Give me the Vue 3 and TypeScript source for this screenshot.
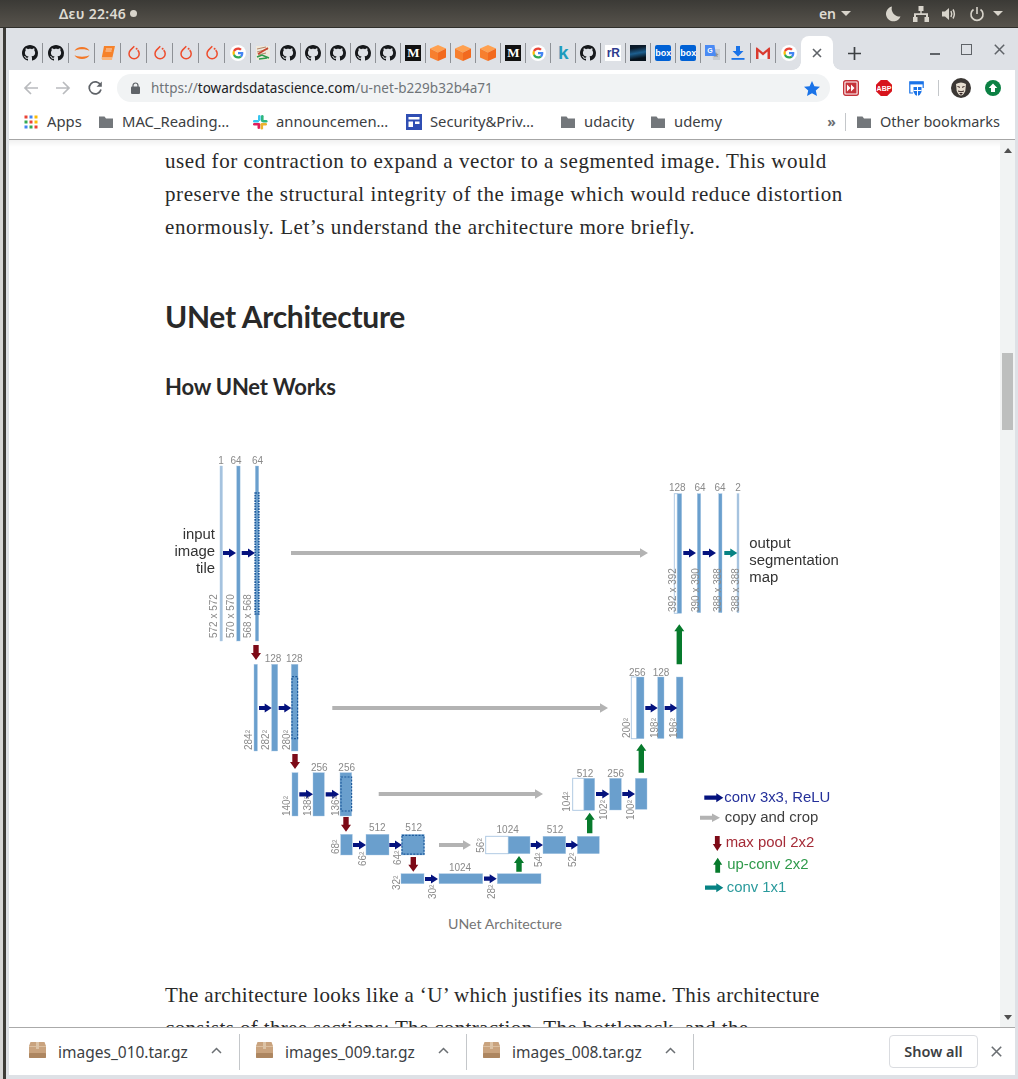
<script setup lang="ts">
type Bar = { x: number; w: number; y: number; h: number; light?: boolean };
type Arrow = { a: number[]; c: string; t?: number; hw?: number; hl?: number };

const tabs: string[] = [
  'gh','gh','jup','book','torch','torch','torch','torch','g',
  'chart','gh','gh','gh','gh','gh','m','cube','cube','cube','m','g','k','gh','rr','dark','box','box','tr','dl','gmail','g',
];
const bookmarks = [
  { icon: 'apps', label: 'Apps', w: 75 },
  { icon: 'folder', label: 'MAC_Reading…', w: 154 },
  { icon: 'slack', label: 'announcemen…', w: 154 },
  { icon: 'sec', label: 'Security&Priv…', w: 154 },
  { icon: 'folder', label: 'udacity', w: 90 },
  { icon: 'folder', label: 'udemy', w: 90 },
];
const downloads = ['images_010.tar.gz', 'images_009.tar.gz', 'images_008.tar.gz'];

const bars: Bar[] = [
  { x: 220, w: 2.4, y: 465, h: 175, light: true },
  { x: 236.7, w: 3.4, y: 465, h: 175 },
  { x: 255.3, w: 3.4, y: 465, h: 175 },
  { x: 254, w: 3.4, y: 663.3, h: 86.7 },
  { x: 271.7, w: 6, y: 663.3, h: 86.7 },
  { x: 291.3, w: 6.7, y: 663.3, h: 86.7 },
  { x: 292, w: 6, y: 771.7, h: 43.3 },
  { x: 313, w: 11.3, y: 771.7, h: 43.3 },
  { x: 340, w: 11.7, y: 771.7, h: 43.3 },
  { x: 340.7, w: 11.6, y: 833.3, h: 20.7 },
  { x: 366, w: 23, y: 833.3, h: 20.7 },
  { x: 401.7, w: 22.6, y: 833.3, h: 20.7 },
  { x: 401, w: 23, y: 872.7, h: 10 },
  { x: 439, w: 43.7, y: 872.7, h: 10 },
  { x: 497.3, w: 43.7, y: 872.7, h: 10 },
  { x: 508.3, w: 21.7, y: 835.3, h: 17.4 },
  { x: 543, w: 22.7, y: 835.3, h: 17.4 },
  { x: 577.3, w: 22, y: 835.3, h: 17.4 },
  { x: 584, w: 10.7, y: 777.3, h: 32 },
  { x: 609.7, w: 11.6, y: 777.3, h: 31.7 },
  { x: 635.3, w: 11.7, y: 777.3, h: 31 },
  { x: 636.7, w: 7.3, y: 676, h: 61.7 },
  { x: 657.7, w: 6.3, y: 676, h: 61.5 },
  { x: 676.3, w: 6.7, y: 676, h: 61.5 },
  { x: 677.3, w: 4.4, y: 492.7, h: 119.6 },
  { x: 697.3, w: 3.4, y: 492.7, h: 119 },
  { x: 718.7, w: 3.3, y: 492.7, h: 119 },
  { x: 737, w: 2, y: 492.7, h: 119, light: true },
];
const whites = [
  { x: 485.7, w: 22.6, y: 835.3, h: 17.4 },
  { x: 572.7, w: 11.3, y: 777.3, h: 32 },
  { x: 631.3, w: 5.4, y: 676, h: 61.7 },
  { x: 674.3, w: 3, y: 492.7, h: 119.6 },
];
const dotted = [
  { x: 255.2, w: 3.6, y: 492, h: 121, sw: 1.7, dash: '1.7 1' },
  { x: 292, w: 5.6, y: 675.7, h: 62, sw: 1.2, dash: '2 1.3' },
  { x: 341, w: 10.6, y: 776, h: 34, sw: 1.2, dash: '2 1.3' },
  { x: 402, w: 22, y: 834.4, h: 18.8, sw: 1.2, dash: '2 1.3' },
];

const NAVY = '#04127e';
const RED = '#7d0a17';
const GREEN = '#077a2c';
const GRAY = '#b3b3b3';
const TEAL = '#078283';

const arrows: Arrow[] = [
  ...[[223,552,236],[241.7,552,255],[259,707,271.7],[278.7,707,291.3],[299.3,793.3,313],[325.7,793.3,339],
    [353,844,366],[389.3,844,402],[425,878,438],[484,877.7,496.7],[530.7,844,543],[566,844,578.3],
    [596,793,609.3],[622.3,793,635],[645.3,707,657.7],[664.7,707,677.3],[683.3,552,696],[702.7,552,716]]
    .map(v => ({ a: [v[0], v[1], v[2], v[1]], c: NAVY })),
  { a: [724.3, 552, 737.3, 552], c: TEAL },
  ...[[291,552,648],[332.3,707,608],[378.7,793,543],[439,844,471]]
    .map(v => ({ a: [v[0], v[1], v[2], v[1]], c: GRAY, t: 4, hw: 9.5, hl: 8 })),
  ...[[256,644,659],[295,753,768],[346,816,830.7],[413.3,856,870.7]]
    .map(v => ({ a: [v[0], v[1], v[0], v[2]], c: RED, t: 5.4, hw: 10, hl: 7 })),
  ...[[519,870.7,855],[589.7,832.3,811.7],[641.3,771.7,742.7],[679.3,663.3,623.3]]
    .map(v => ({ a: [v[0], v[1], v[0], v[2]], c: GREEN, t: 5.4, hw: 10, hl: 7 })),
  { a: [704.3, 796.7, 723.3, 796.7], c: NAVY },
  { a: [700, 816.7, 720, 816.7], c: GRAY, t: 4, hw: 8.5, hl: 8 },
  { a: [717.3, 835, 717.3, 850], c: RED, t: 4.8, hw: 9, hl: 7 },
  { a: [717.7, 871.7, 717.7, 856.7], c: GREEN, t: 4.8, hw: 9, hl: 7 },
  { a: [705, 886.7, 723.3, 886.7], c: TEAL },
];

function arrowPoints(ar: Arrow): string {
  const [x1, y1, x2, y2] = ar.a;
  const t = (ar.t ?? 4.2) / 2;
  const hw = (ar.hw ?? 9) / 2;
  const hl = ar.hl ?? 7;
  const len = Math.hypot(x2 - x1, y2 - y1);
  const ux = (x2 - x1) / len;
  const uy = (y2 - y1) / len;
  const nx = -uy;
  const ny = ux;
  const bx = x2 - ux * hl;
  const by = y2 - uy * hl;
  const p = [
    [x1 + nx * t, y1 + ny * t], [bx + nx * t, by + ny * t], [bx + nx * hw, by + ny * hw], [x2, y2],
    [bx - nx * hw, by - ny * hw], [bx - nx * t, by - ny * t], [x1 - nx * t, y1 - ny * t],
  ];
  return p.map(q => q.map(n => n.toFixed(1)).join(',')).join(' ');
}

const tops = [
  ['1',221,463],['64',236,463],['64',257.6,463],['128',273,660.5],['128',294.3,660.5],
  ['256',319.3,770],['256',346.7,770],['512',377.3,830],['512',413.7,830],['1024',460,870],
  ['1024',507.7,832],['512',555,832],['512',585,775.5],['256',615.7,775.5],['256',637.3,674.5],['128',661,674.5],
  ['128',677.3,490],['64',700,490],['64',720,490],['2',738,490],
] as [string, number, number][];

const sides = [
  ['572 x 572',217,637],['570 x 570',234,637],['568 x 568',251,637],
  ['284²',252,749],['282²',269,749],['280²',290,749],
  ['140²',290,815],['138²',311,815],['136²',339,815],
  ['68²',339,853],['66²',366,865],['64²',401,864],
  ['32²',400,889],['30²',436,898],['28²',495,898],
  ['56²',484,851.7],['54²',542,866],['52²',576.3,866],
  ['104²',570.3,810.7],['102²',607.3,819],['100²',633.7,819],
  ['200²',630,737],['198²',657.7,737],['196²',677,737],
  ['392 x 392',675.7,611],['390 x 390',699,611],['388 x 388',720.7,611],['388 x 388',739.3,611],
] as [string, number, number][];

const legend = [
  { t: 'conv 3x3, ReLU', x: 724.3, y: 801, c: '#24309a' },
  { t: 'copy and crop', x: 724.7, y: 820.7, c: '#3f3f3f' },
  { t: 'max pool 2x2', x: 725.7, y: 846, c: '#a52c38' },
  { t: 'up-conv 2x2', x: 727.3, y: 868.3, c: '#2f9a4b' },
  { t: 'conv 1x1', x: 726.7, y: 890.7, c: '#2a9a9c' },
];
const gh = 'M8 0C3.58 0 0 3.58 0 8c0 3.54 2.29 6.53 5.47 7.59.4.07.55-.17.55-.38 0-.19-.01-.82-.01-1.49-2.01.37-2.53-.49-2.69-.94-.09-.23-.48-.94-.82-1.13-.28-.15-.68-.52-.01-.53.63-.01 1.08.58 1.23.82.72 1.21 1.87.87 2.33.66.07-.52.28-.87.51-1.07-1.78-.2-3.64-.89-3.64-3.95 0-.87.31-1.59.82-2.15-.08-.2-.36-1.02.08-2.12 0 0 .67-.21 2.2.82.64-.18 1.32-.27 2-.27.68 0 1.36.09 2 .27 1.53-1.04 2.2-.82 2.2-.82.44 1.1.16 1.92.08 2.12.51.56.82 1.27.82 2.15 0 3.07-1.87 3.75-3.65 3.95.29.25.54.73.54 1.48 0 1.07-.01 1.93-.01 2.2 0 .21.15.46.55.38A8.013 8.013 0 0016 8c0-4.42-3.58-8-8-8z';
</script>

<template>
  <div class="screen">
    <header class="topbar">
      <div class="clock">Δευ 22:46<i class="dot"></i></div>
      <div class="tray">
        <span class="lang">en</span><i class="caret lang-caret"></i>
        <svg class="tray-ic moon" viewBox="0 0 16 16"><path d="M7 .5a7.500 7.500 0 1 0 8.500 10A7.800 7.800 0 0 1 7 .5z" fill="#d8d4cb"/></svg>
        <svg class="tray-ic" viewBox="0 0 16 16"><path d="M5.500 0h5v5H8.700v2.200H15V11h1.500v5h-5v-5H13V9H3v2h1.500v5h-5v-5H1V7.200h6.300V5H5.500z" fill="#d8d4cb"/></svg>
        <svg class="tray-ic" viewBox="0 0 16 16"><path d="M1 5.500h3L8 2v12L4 10.500H1z" fill="#d8d4cb"/><path d="M10 5q1.500 3 0 6M12 3.500q2.700 4.500 0 9" stroke="#d8d4cb" stroke-width="1.500" fill="none"/></svg>
        <svg class="tray-ic" viewBox="0 0 16 16"><path d="M4.500 3.500a6 6 0 1 0 7 0" stroke="#d8d4cb" stroke-width="1.600" fill="none"/><path d="M8 1v7" stroke="#d8d4cb" stroke-width="1.600"/></svg>
        <i class="caret last-caret"></i>
      </div>
    </header>

    <div class="desk">
      <div class="edge"></div>
      <div class="window">
        <div class="tabstrip">
          <div v-for="(t, i) in tabs" :key="i" class="tab" :class="{ wide: i < 9, nosep: i === tabs.length - 1 }">
            <svg v-if="t === 'gh'" class="fav" viewBox="0 0 16 16"><path :d="gh" fill="#16181b"/></svg>
            <svg v-else-if="t === 'jup'" class="fav" viewBox="0 0 16 16"><path d="M.5 6C2.500 .8 13.500 .8 15.500 6C13 3.800 3 3.800 .5 6z M.5 10C2.500 15.200 13.500 15.200 15.500 10C13 12.200 3 12.200 .5 10z" fill="#f37726"/></svg>
            <svg v-else-if="t === 'book'" class="fav" viewBox="0 0 16 16"><path d="M4 1h11l-2.600 11.500H1.800z" fill="#f6822a"/><path d="M1.800 12.500h10.600l-.5 2.500H2.300q-1.300-1.200-.5-2.500z" fill="#fbb77c"/><path d="M6 4h6M5.500 6h6" stroke="#fff" stroke-width=".7"/></svg>
            <svg v-else-if="t === 'torch'" class="fav" viewBox="0 0 16 16"><path d="M8.300 1.300L4.500 5.100a5.100 5.100 0 1 0 7.200 0" stroke="#ee4c2c" stroke-width="1.500" fill="none"/><circle cx="10.600" cy="3.800" r="1" fill="#ee4c2c"/></svg>
            <svg v-else-if="t === 'g'" class="fav" viewBox="0 0 64 64"><circle cx="32" cy="32" r="32" fill="#fff"/><g transform="translate(10 10) scale(.92)"><path fill="#EA4335" d="M24 9.500c3.540 0 6.710 1.220 9.210 3.600l6.850-6.850C35.900 2.380 30.470 0 24 0 14.620 0 6.510 5.380 2.560 13.220l7.980 6.190C12.430 13.720 17.740 9.500 24 9.500z"/><path fill="#4285F4" d="M46.980 24.550c0-1.570-.15-3.090-.38-4.550H24v9.020h12.940c-.58 2.960-2.260 5.480-4.780 7.180l7.730 6c4.510-4.180 7.090-10.360 7.090-16.650z"/><path fill="#FBBC05" d="M10.530 28.590c-.48-1.450-.76-2.990-.76-4.590s.27-3.140.76-4.590l-7.980-6.190C.92 16.460 0 20.120 0 24c0 3.880.92 7.540 2.560 10.780l7.970-6.190z"/><path fill="#34A853" d="M24 48c6.480 0 11.930-2.130 16.030-5.810l-7.730-6c-2.150 1.450-4.920 2.300-8.300 2.300-6.260 0-11.570-4.220-13.470-9.910l-7.980 6.190C6.510 42.620 14.620 48 24 48z"/></g></svg>
            <svg v-else-if="t === 'chart'" class="fav" viewBox="0 0 16 16"><rect x="1" y="1" width="14" height="14" fill="#efe9dc"/><path d="M2 4l9-2M2 7l11-3M3 10l8-2" stroke="#b5866a" stroke-width="1"/><path d="M3 9l10-6" stroke="#c7452f" stroke-width="1.800"/><path d="M2 12l5-2 7 3M4 14l8-1" stroke="#2f9a4b" stroke-width="1.600" fill="none"/></svg>
            <span v-else-if="t === 'm'" class="fav medium">M</span>
            <svg v-else-if="t === 'cube'" class="fav" viewBox="0 0 16 16"><path d="M8 0l8 3.500L8 7.500 0 3.500z" fill="#ffa04f"/><path d="M0 3.500l8 4V16l-8-3.500z" fill="#f77f2f"/><path d="M16 3.500l-8 4V16l8-3.500z" fill="#f26a1f"/></svg>
            <span v-else-if="t === 'k'" class="fav kaggle">k</span>
            <span v-else-if="t === 'rr'" class="fav rr">rR</span>
            <span v-else-if="t === 'dark'" class="fav darkimg"></span>
            <span v-else-if="t === 'box'" class="fav boxlogo">box</span>
            <svg v-else-if="t === 'tr'" class="fav" viewBox="0 0 16 16"><path d="M7 4h8v11H8z" fill="#c9cdd2"/><path d="M11 7l.8 1.800 1.900.2-1.400 1.300.4 1.900-1.700-1-1.700 1 .4-1.900L8.300 9l1.900-.2z" fill="#8b9096"/><path d="M0 0h9.500L11 11H0z" fill="#4a8af4"/><text x="5" y="8" font-size="7" fill="#fff" font-family="Liberation Sans" font-weight="700" text-anchor="middle">G</text></svg>
            <svg v-else-if="t === 'dl'" class="fav" viewBox="0 0 16 16"><path d="M6 1h4v5h3.500L8 11.500 2.500 6H6z" fill="#1a73e8"/><rect x="1.500" y="13" width="13" height="1.800" fill="#1a73e8"/></svg>
            <svg v-else-if="t === 'gmail'" class="fav" viewBox="0 0 16 16"><path d="M1 3l7 5.500L15 3v11H1z" fill="#eceff1"/><path d="M1 14V2.500h1L8 7.500l6-5h1V14h-2.500V6.500L8 10.500 3.500 6.500V14z" fill="#d93a2f"/></svg>
          </div>
          <div class="active-tab"><svg width="10" height="10" viewBox="0 0 10 10"><path d="M1 1l8 8M9 1l-8 8" stroke="#5f6368" stroke-width="1.600"/></svg></div>
          <svg class="plus" width="13" height="13" viewBox="0 0 13 13"><path d="M6.500 0v13M0 6.500h13" stroke="#3c4043" stroke-width="1.700"/></svg>
          <div class="winctl">
            <i class="min"></i><i class="max"></i>
            <svg width="11" height="11" viewBox="0 0 11 11"><path d="M.8.800l9.400 9.400M10.200.800L.8 10.200" stroke="#5f6368" stroke-width="1.500"/></svg>
          </div>
        </div>

        <div class="toolbar">
          <button class="nav"><svg width="16" height="16" viewBox="0 0 16 16"><path d="M15 8H2M8 2L2 8l6 6" stroke="#b9bbbe" stroke-width="1.700" fill="none"/></svg></button>
          <button class="nav"><svg width="16" height="16" viewBox="0 0 16 16"><path d="M1 8h13M8 2l6 6-6 6" stroke="#b9bbbe" stroke-width="1.700" fill="none"/></svg></button>
          <button class="nav"><svg width="16" height="16" viewBox="0 0 16 16"><path d="M13.500 5A6 6 0 1 0 14 9.500" stroke="#5f6368" stroke-width="1.700" fill="none"/><path d="M14.800 1.500v5.300H9.500z" fill="#5f6368"/></svg></button>
          <div class="omni">
            <svg class="lock" width="9" height="12" viewBox="0 0 9 12"><path d="M2 5V3.500a2.500 2.500 0 0 1 5 0V5" stroke="#5f6368" stroke-width="1.200" fill="none"/><rect y="4.500" width="9" height="7.500" rx="1" fill="#5f6368"/></svg>
            <span class="url"><span class="u1">https://</span><span class="u2">towardsdatascience.com</span><span class="u1">/u-net-b229b32b4a71</span></span>
            <svg class="star" width="16" height="15" viewBox="0 0 16 15"><path d="M8 0l2.400 5.200 5.600.6-4.200 3.800 1.200 5.400L8 12.200 3 15l1.200-5.400L0 5.800l5.600-.6z" fill="#1a73e8"/></svg>
          </div>
          <div class="ext">
            <svg width="16" height="16" viewBox="0 0 16 16"><rect x=".7" y=".7" width="14.600" height="14.600" rx="2" fill="#fff" stroke="#c5333a" stroke-width="1.400"/><rect x="2.500" y="2.500" width="11" height="11" fill="#c5333a"/><path d="M4 4.500l3.500 3.500L4 11.500zM8 4.500l3.500 3.500L8 11.500z" fill="#fff"/></svg>
          </div>
          <div class="ext">
            <svg width="16" height="16" viewBox="0 0 16 16"><path d="M4.800 0h6.400L16 4.800v6.400L11.200 16H4.800L0 11.200V4.800z" fill="#d7141c"/><text x="8" y="10.500" text-anchor="middle" font-size="7" font-weight="700" font-family="Liberation Sans" fill="#fff">ABP</text></svg>
          </div>
          <div class="ext">
            <svg width="15" height="15" viewBox="0 0 15 15"><path d="M4 12H.8V.8h13.400V7" stroke="#1a73e8" stroke-width="1.200" fill="none"/><rect x=".8" y=".8" width="13.400" height="2.600" fill="#1a73e8"/><path d="M4.500 6h8v5q-1 3-4 4-3-1-4-4z" fill="#1a73e8"/><path d="M8.500 6v9M4.500 9.500h8" stroke="#fff" stroke-width="1"/></svg>
          </div>
          <i class="ext-sep"></i>
          <div class="ext">
            <svg width="20" height="20" viewBox="0 0 20 20"><circle cx="10" cy="10" r="10" fill="#3b3734"/><path d="M5 6q5-3 10 0l-.7 7q-2 4.500-4.300 4.500T5.700 13z" fill="#e6ded0"/><path d="M6.500 8.500l2.500.8M13.500 8.500l-2.500.8M7 13q3 1.500 6 0" stroke="#322" stroke-width="1" fill="none"/><path d="M8 15l2 2 2-2" fill="#322"/></svg>
          </div>
          <div class="ext">
            <svg width="16" height="16" viewBox="0 0 16 16"><circle cx="8" cy="8" r="8" fill="#0b8043"/><path d="M8 3.500l4.300 4.500H10v4H6V8H3.700z" fill="#fff"/></svg>
          </div>
        </div>

        <div class="bookmarks">
          <div v-for="b in bookmarks" :key="b.label" class="bm" :style="{ width: b.w + 'px' }">
            <svg class="bm-ic" viewBox="0 0 16 16">
              <template v-if="b.icon === 'apps'">
                <rect v-for="(c, k) in ['#ea4335','#4285f4','#fbbc05','#34a853','#ea4335','#fbbc05','#4285f4','#34a853','#ea4335']" :key="k" :x="1.500 + (k % 3) * 5" :y="1.500 + Math.floor(k / 3) * 5" width="3" height="3" :fill="c"/>
              </template>
              <path v-else-if="b.icon === 'folder'" d="M1 2.500h5.500L8 4.500h7v9.500H1z" fill="#73777b"/>
              <template v-else-if="b.icon === 'slack'">
                <rect x="6" y="1" width="2.600" height="6" rx="1.300" fill="#36c5f0"/><rect x="1" y="6" width="6" height="2.600" rx="1.300" fill="#36c5f0"/>
                <rect x="9" y="1" width="2.600" height="7" rx="1.300" fill="#2eb67d"/><rect x="10" y="6" width="5.500" height="2.600" rx="1.300" fill="#2eb67d"/>
                <rect x="8.500" y="9" width="6.500" height="2.600" rx="1.300" fill="#ecb22e"/><rect x="8.500" y="10" width="2.600" height="5.500" rx="1.300" fill="#ecb22e"/>
                <rect x="5.500" y="9" width="2.600" height="6" rx="1.300" fill="#e01e5a"/><rect x="1" y="9" width="6.500" height="2.600" rx="1.300" fill="#e01e5a"/>
              </template>
              <template v-else>
                <rect width="16" height="16" fill="#2f4eb3"/><rect x="2.500" y="3" width="11" height="2.500" fill="#fff"/><rect x="2.500" y="7.500" width="4.500" height="5.500" fill="#fff"/><rect x="9" y="7.500" width="4.500" height="2.500" fill="#fff"/>
              </template>
            </svg>
            <span class="bm-label">{{ b.label }}</span>
          </div>
          <span class="more">»</span>
          <i class="bm-sep"></i>
          <div class="bm other">
            <svg class="bm-ic" viewBox="0 0 16 16"><path d="M1 2.500h5.500L8 4.500h7v9.500H1z" fill="#73777b"/></svg>
            <span class="bm-label">Other bookmarks</span>
          </div>
        </div>

        <div class="viewport">
          <main class="page">
            <article class="article">
              <p class="para">
                <span>used for contraction to expand a vector to a segmented image. This would</span>
                <span>preserve the structural integrity of the image which would reduce distortion</span>
                <span>enormously. Let’s understand the architecture more briefly.</span>
              </p>
              <h2 class="h2">UNet Architecture</h2>
              <h3 class="h3">How UNet Works</h3>
              <figure class="fig">
                <svg class="diagram" width="690" height="470" viewBox="165 445 690 470">
                  <rect v-for="(r, i) in whites" :key="'w' + i" :x="r.x" :y="r.y" :width="r.w" :height="r.h" fill="#fff" stroke="#a9c5e0" stroke-width=".9"/>
                  <rect v-for="(r, i) in bars" :key="'b' + i" :x="r.x" :y="r.y" :width="r.w" :height="r.h" :fill="r.light ? '#a5c2de' : '#6a9fcd'" stroke="#a9c8e4" stroke-width=".4"/>
                  <rect v-for="(r, i) in dotted" :key="'d' + i" :x="r.x" :y="r.y" :width="r.w" :height="r.h" fill="none" stroke="#1d5a9c" :stroke-width="r.sw" :stroke-dasharray="r.dash"/>
                  <polygon v-for="(a, i) in arrows" :key="'a' + i" :points="arrowPoints(a)" :fill="a.c"/>
                  <text v-for="(t, i) in tops" :key="'t' + i" class="lbl" :x="t[1]" :y="t[2]" text-anchor="middle">{{ t[0] }}</text>
                  <text v-for="(t, i) in sides" :key="'s' + i" class="lbl" :transform="`translate(${t[1]} ${t[2]}) rotate(-90)`">{{ t[0] }}</text>
                  <text class="big" x="215" y="538" text-anchor="end">input</text>
                  <text class="big" x="215" y="555" text-anchor="end">image</text>
                  <text class="big" x="215" y="572" text-anchor="end">tile</text>
                  <text class="big" x="749.300" y="547">output</text>
                  <text class="big" x="749.300" y="564">segmentation</text>
                  <text class="big" x="749.300" y="580.700">map</text>
                  <text v-for="l in legend" :key="l.t" class="big" :x="l.x" :y="l.y" :style="{ fill: l.c }">{{ l.t }}</text>
                </svg>
                <figcaption class="cap">UNet Architecture</figcaption>
              </figure>
              <p class="para second">
                <span>The architecture looks like a ‘U’ which justifies its name. This architecture</span>
                <span>consists of three sections: The contraction, The bottleneck, and the</span>
              </p>
            </article>
          </main>
          <aside class="scrollbar">
            <i class="sb-up"></i>
            <i class="thumb"></i>
            <i class="sb-down"></i>
          </aside>
        </div>

        <footer class="downloads">
          <div v-for="d in downloads" :key="d" class="dl">
            <svg class="pkg" width="17" height="16" viewBox="0 0 17 16"><path d="M1.500 0h14L17 4v11q0 1-1 1H1q-1 0-1-1V4z" fill="#c9a37e"/><path d="M0 4.500h17" stroke="#e0c6a8" stroke-width=".8"/><rect y="11" width="17" height="5" rx="1" fill="#ad8660"/><path d="M7 0h3v7H7z" fill="#dcc3a6"/></svg>
            <span class="dl-name">{{ d }}</span>
            <svg class="dl-caret" width="11" height="7" viewBox="0 0 11 7"><path d="M1 6l4.500-4.500L10 6" stroke="#6b6f73" stroke-width="1.500" fill="none"/></svg>
          </div>
          <div class="dl-right">
            <button class="showall">Show all</button>
            <svg width="11" height="11" viewBox="0 0 11 11"><path d="M.8.800l9.400 9.400M10.200.800L.8 10.200" stroke="#6b6f73" stroke-width="1.600"/></svg>
          </div>
        </footer>
      </div>
    </div>
  </div>
</template>

<style scoped>
.screen { width: 1018px; height: 1079px; overflow: hidden; display: flex; flex-direction: column; background: #dee1e6; font-family: "Noto Sans", "Open Sans", sans-serif; }
.topbar { height: 27px; flex: none; display: flex; align-items: center; justify-content: space-between; background: linear-gradient(#3b3a36, #57534c); color: #dfdbd2; font-size: 14px; font-weight: 600; border-bottom: 1px solid #302f2b; }
.clock { margin-left: 59px; display: flex; align-items: center; letter-spacing: .3px; }
.dot { width: 7px; height: 7px; border-radius: 50%; background: #d8d4cb; margin-left: 4px; }
.tray { display: flex; align-items: center; margin-right: 15px; }
.lang { margin-right: 5px; }
.caret { width: 0; height: 0; border: 5px solid transparent; border-top: 5px solid #d8d4cb; border-bottom: 0; }
.lang-caret { margin-right: 34px; }
.last-caret { margin-left: -4px; }
.tray-ic { width: 16px; height: 16px; margin-right: 12px; }
.desk { flex: 1; display: flex; min-height: 0; }
.edge { width: 9px; flex: none; background: linear-gradient(90deg, #d6d6d6 0 3px, #3c3b37 3px 6px, #dee1e6 6px); }
.window { flex: 1; min-width: 0; display: flex; flex-direction: column; padding-right: 3px; padding-bottom: 4px; }
.tabstrip { height: 42px; flex: none; display: flex; align-items: center; padding-left: 8.300px; background: #dee1e6; padding-top: 8px; box-sizing: border-box; }
.tab { width: 25px; height: 20px; flex: none; display: flex; align-items: center; justify-content: center; border-right: 1px solid #8e9196; box-sizing: border-box; }
.tab.wide { width: 26px; }
.tab.nosep { border-right: 0; }
.fav { width: 16px; height: 16px; display: block; }
.medium { background: #111; color: #fff; font: 700 13px/16px "Liberation Serif", serif; text-align: center; }
.kaggle { color: #1d9bbd; font: 700 19px/15px "Liberation Sans", sans-serif; text-align: center; }
.rr { background: #fff; color: #2f3c8f; font: 700 12px/16px "Liberation Sans", sans-serif; text-align: center; }
.darkimg { background: linear-gradient(170deg, #0b1a2a 20%, #1d5f8f 50%, #07121c 80%); }
.boxlogo { background: #0061d5; color: #fff; border-radius: 2px; font: 700 9px/16px "Liberation Sans", sans-serif; text-align: center; }
.active-tab { position: relative; width: 32px; height: 34px; flex: none; align-self: flex-end; background: #fff; border-radius: 8px 8px 0 0; display: flex; align-items: center; justify-content: center; }
.active-tab::before, .active-tab::after { content: ""; position: absolute; bottom: 0; width: 8px; height: 8px; }
.active-tab::before { left: -8px; background: radial-gradient(circle at 0 0, #dee1e6 7.500px, #fff 8px); }
.active-tab::after { right: -8px; background: radial-gradient(circle at 100% 0, #dee1e6 7.500px, #fff 8px); }
.plus { margin-left: 15px; flex: none; }
.winctl { margin-left: auto; display: flex; align-items: center; margin-top: -8px; }
.min { width: 10px; height: 2px; background: #5f6368; margin-right: 21px; margin-top: 9px; }
.max { width: 9px; height: 9px; border: 1.500px solid #5f6368; margin-right: 22px; }
.winctl svg { margin-right: 10px; }
.toolbar { height: 36px; flex: none; background: #fff; display: flex; align-items: center; padding-left: 6px; }
.nav { width: 32px; height: 32px; border: 0; padding: 0; background: none; display: flex; align-items: center; justify-content: center; }
.omni { margin-left: 6px; width: 713px; height: 28px; border-radius: 14px; background: #f1f3f4; display: flex; align-items: center; flex: none; box-sizing: border-box; padding: 0 10px 0 14px; }
.lock { flex: none; }
.url { margin-left: 11px; font-size: 13.500px; letter-spacing: .03px; white-space: nowrap; }
.u1 { color: #6f7478; }
.u2 { color: #202124; }
.star { margin-left: auto; }
.ext { width: 32px; height: 32px; display: flex; align-items: center; justify-content: center; flex: none; }
.omni + .ext { margin-left: 5px; margin-right: 1px; }
.ext-sep { width: 1px; height: 16px; background: #c4c7ca; margin: 0 6px; flex: none; }
.bookmarks { height: 31px; padding-bottom: 2px; flex: none; background: #fff; display: flex; align-items: center; padding-left: 14px; border-bottom: 1px solid #a6a6a6; box-sizing: content-box; }
.bm { display: flex; align-items: center; gap: 8px; flex: none; }
.bm-ic { width: 16px; height: 16px; flex: none; }
.bm-label { font-size: 14.800px; line-height: 20px; color: #3c4043; white-space: nowrap; margin-top: -2px; }
.other .bm-label { font-size: 14.500px; }
.more { margin-left: auto; color: #6b6f73; font-size: 14px; font-weight: 700; margin-right: 9px; }
.bm-sep { width: 1px; height: 18px; background: #c4c7ca; margin-right: 10px; }
.other { margin-right: 15px; }
.viewport { flex: 1; min-height: 0; display: flex; background: #fff; }
.page { flex: 1; min-width: 0; overflow: hidden; background: linear-gradient(#f1f1f1, #fff 7px); }
.article { padding: 4.500px 0 0 156px; color: #292929; }
.para { margin: 0; font: 400 21px/33px "Liberation Serif", serif; letter-spacing: .57px; }
.para.second { letter-spacing: .35px; }
.para span { display: block; white-space: nowrap; }
.h2 { margin: 50px 0 0; font: 700 30px/44px Lato, sans-serif; letter-spacing: -.3px; color: #292929; }
.h3 { margin: 34px 0 0; font: 700 22px/30px Lato, sans-serif; letter-spacing: -.2px; color: #292929; }
.fig { margin: 44px 0 0; width: 680px; }
.diagram { display: block; margin: 0; filter: blur(.45px); overflow: visible; }
.lbl { font: 10px "Liberation Sans", sans-serif; fill: #8a8a8a; }
.big { font: 14.900px "Liberation Sans", sans-serif; fill: #333; }
.cap { width: 680px; text-align: center; font: 400 14.200px/18px Lato, sans-serif; color: #757575; margin-top: -1px; }
.fig + .para { margin-top: 46px; }
.scrollbar { width: 15px; flex: none; background: #f1f3f3; position: relative; display: flex; flex-direction: column; align-items: center; }
.sb-up, .sb-down { width: 0; height: 0; border: 4px solid transparent; position: absolute; }
.sb-up { top: 8px; border-bottom: 5px solid #505050; border-top: 0; }
.sb-down { bottom: 7px; border-top: 5px solid #505050; border-bottom: 0; }
.thumb { width: 11px; height: 77px; background: #bdbfbe; margin-top: 213px; }
.downloads { height: 47px; flex: none; background: #fff; border-top: 1px solid #aaa; display: flex; align-items: center; padding-left: 4px; }
.dl { width: 227px; height: 36px; flex: none; display: flex; align-items: center; border-right: 1px solid #c4c7ca; box-sizing: border-box; padding-left: 16px; position: relative; }
.dl-name { margin-left: 12px; font-size: 15.500px; color: #3c4043; margin-top: 1px; }
.pkg { flex: none; margin-top: -3px; }
.dl-caret { position: absolute; right: 17px; top: 13px; }
.dl-right { margin-left: auto; display: flex; align-items: center; margin-right: 13px; }
.showall { width: 89px; height: 33px; background: #fff; border: 1px solid #dadce0; border-radius: 4px; font: 600 14.500px "Noto Sans", sans-serif; color: #3c4043; margin-right: 13px; padding: 0 0 2px; }
</style>

<style>
html, body { margin: 0; padding: 0; background: #dee1e6; }
</style>
